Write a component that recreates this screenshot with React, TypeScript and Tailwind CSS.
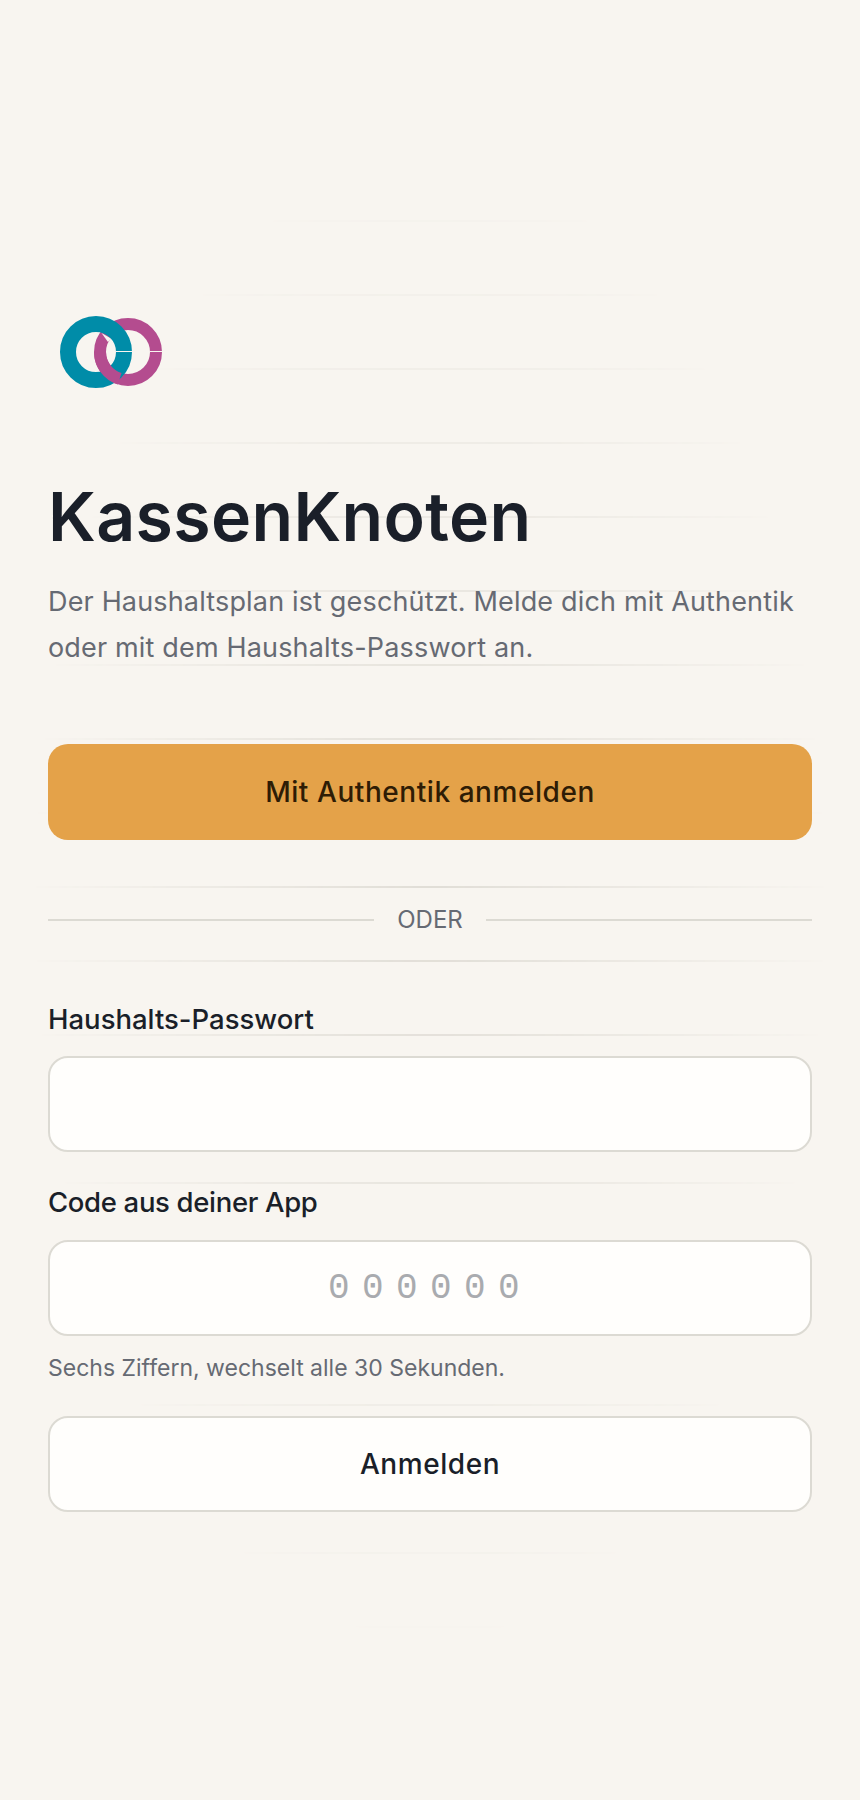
const font = 'font-["Inter","Noto_Sans",sans-serif]';

function Logo() {
  return (
    <svg width="128" height="96" viewBox="0 0 128 96" fill="none">
      <circle cx="80" cy="48" r="28" stroke="#b44c8f" strokeWidth="12" />
      <path d="M53.5 29 L63 34.500 L60 38 Z" fill="#f8f5f0" />
      <circle cx="48" cy="48" r="28" stroke="#008ca8" strokeWidth="16" />
      <path d="M52 48 A28 28 0 0 0 71.700 74.700" stroke="#b44c8f" strokeWidth="12" />
      <path d="M68 47.500 H84 M102 47.500 H114" stroke="#f8f5f0" strokeWidth="1" />
    </svg>
  );
}

export default function App() {
  return (
    <div className={`relative min-h-[1800px] overflow-hidden bg-[#f8f5f0] ${font}`}>
      <div className="pointer-events-none absolute inset-0 bg-[repeating-linear-gradient(to_bottom,transparent_0,transparent_72px,#e0ddd6_72px,#e0ddd6_74px)] [mask-image:radial-gradient(ellipse_400px_750px_at_center,black,transparent)]" />
      <main className="relative flex flex-col px-12 pt-[304px]">
        <Logo />
        <h1 className="mt-[76px] text-[68px] leading-[80px] font-semibold tracking-[0.005em] text-[#1a1f29]">KassenKnoten</h1>
        <p className="mt-[23px] text-[27px] leading-[46px] tracking-[0.006em] text-[#666a73]">
          Der Haushaltsplan ist geschützt. Melde dich mit Authentik oder mit dem Haushalts-Passwort an.
        </p>
        <button className="mt-[73px] h-24 rounded-[20px] bg-[#e4a249] text-[28px] font-[550] tracking-[0.02em] text-[#2e1c05]">Mit Authentik anmelden</button>
        <div className="mt-[62px] flex items-center gap-[23px] text-[24px] leading-9 text-[#666a73]">
          <span className="h-0.5 flex-1 bg-[#dcdad3]" />
          <span>ODER</span>
          <span className="h-0.5 flex-1 bg-[#dcdad3]" />
        </div>
        <label className="mt-[61px] text-[27.500px] leading-10 font-medium text-[#1a1f29]">Haushalts-Passwort</label>
        <input type="password" className="mt-[17px] h-24 rounded-[20px] border-2 border-[#dcdad3] bg-[#fffefc]" />
        <label className="mt-[30px] text-[27.500px] leading-10 font-medium tracking-[-0.012em] text-[#1a1f29]">Code aus deiner App</label>
        <input placeholder="000000" className='mt-[18px] h-24 rounded-[20px] border-2 border-[#dcdad3] bg-[#fffefc] text-center font-["Liberation_Mono",monospace] text-[36px] tracking-[0.345em] placeholder:text-[#a9abaf]' />
        <p className="mt-3.5 text-[23px] leading-9 text-[#666a73]">Sechs Ziffern, wechselt alle 30 Sekunden.</p>
        <button className="mt-[30px] h-24 rounded-[20px] border-2 border-[#dcdad3] bg-[#fffefc] text-[28px] font-[550] tracking-[0.02em] text-[#1a1f29]">Anmelden</button>
      </main>
    </div>
  );
}
